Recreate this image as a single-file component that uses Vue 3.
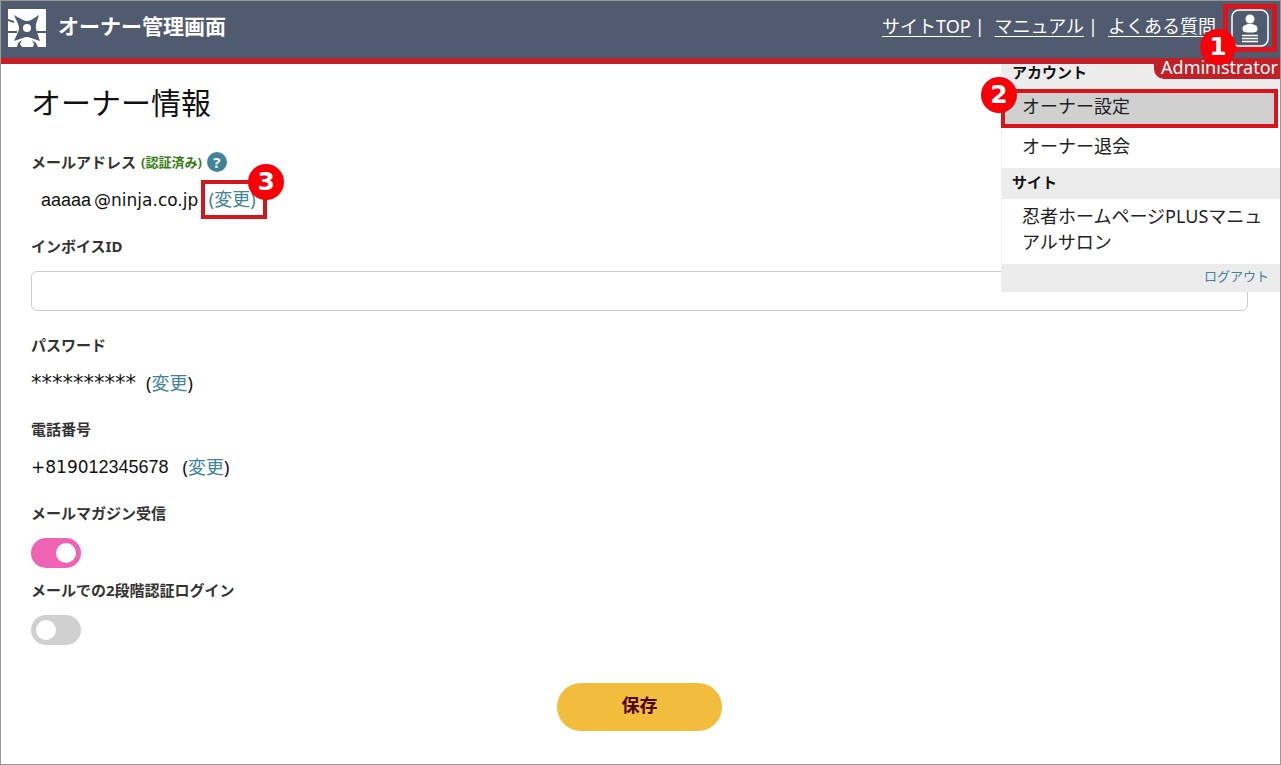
<script setup>
import { ref } from 'vue'

const invoiceId = ref('')
const magazine = ref(true)
const twoStep = ref(false)
</script>

<template>
  <div class="page">
    <header class="header">
      <div class="brand">
        <svg class="logo" viewBox="0 0 38 38" aria-hidden="true">
          <rect width="38" height="38" fill="#fff" />
          <path d="M0 10l6 2v2l-6-2zM0 22h9v2H0zM29 22h9v2h-9z" fill="#515b70" />
          <path d="M9 38l1-4 4-3-2 4 2 3zM30 38l-2-4-4-3 2 4-1 3z" fill="#515b70" />
          <path d="M6 6l9 5q4 2 8 0l8-5-3 9q-1 4 1 8l3 9-9-3q-4-2-8 0l-9 3 4-9q2-4 0-8z" fill="#515b70" />
          <circle cx="19" cy="19" r="4" fill="#fff" />
        </svg>
        <span class="brand-name">オーナー管理画面</span>
      </div>
      <nav class="nav">
        <a href="#">サイトTOP</a><span class="bar">|</span>
        <a href="#">マニュアル</a><span class="bar">|</span>
        <a href="#">よくある質問</a>
        <button class="account" type="button" aria-label="アカウント">
          <svg viewBox="0 0 38 38" aria-hidden="true">
            <rect x="1" y="1" width="36" height="36" rx="7" fill="none" stroke="#fff" stroke-width="1.5" />
            <circle cx="19" cy="10" r="4.5" fill="#fff" />
            <path d="M12 22c-2-5 2-7 7-7s9 2 7 7c-1 2-13 2-14 0z" fill="#fff" />
            <path d="M11 26.500h16M11 29.500h16M11 32.500h16" stroke="#fff" stroke-width="1.5" />
          </svg>
          <span class="mark">1</span>
        </button>
      </nav>

      <aside class="menu">
        <span class="role">Administrator</span>
        <h2 class="menu-title first">アカウント</h2>
        <a class="menu-item current" href="#">オーナー設定<span class="mark">2</span></a>
        <a class="menu-item" href="#">オーナー退会</a>
        <h2 class="menu-title">サイト</h2>
        <a class="menu-item site" href="#">忍者ホームページPLUSマニュアルサロン</a>
        <div class="menu-foot"><a href="#">ログアウト</a></div>
      </aside>
    </header>

    <main class="main">
      <h1>オーナー情報</h1>
      <section class="field">
        <h3 class="label">メールアドレス <small>(認証済み)</small>
          <button class="help" type="button" aria-label="ヘルプ">?</button>
        </h3>
        <div class="value mail">
          <span class="mail-user">aaaaa</span><span class="wide">@ninja.co.jp</span>
          <a class="boxed" href="#">(変更)<span class="mark">3</span></a>
        </div>
      </section>
      <section class="field">
        <label class="label" for="invoice">インボイスID</label>
        <input id="invoice" v-model="invoiceId" class="text" type="text">
      </section>
      <section class="field">
        <h3 class="label">パスワード</h3>
        <div class="value password"><span class="stars">**********</span><span>(<a href="#">変更</a>)</span></div>
      </section>
      <section class="field">
        <h3 class="label">電話番号</h3>
        <div class="value phone"><span><span class="wide">+8190</span><span class="digits">12345678</span></span><span>(<a href="#">変更</a>)</span></div>
      </section>
      <section class="field switch">
        <label class="label" for="magazine">メールマガジン受信</label>
        <input id="magazine" v-model="magazine" class="toggle" type="checkbox">
      </section>
      <section class="field switch">
        <label class="label" for="twostep">メールでの2段階認証ログイン</label>
        <input id="twostep" v-model="twoStep" class="toggle" type="checkbox">
      </section>
      <button class="save" type="button">保存</button>
    </main>
  </div>
</template>

<style>
body {
  margin: 0;
  background: #fff;
}
</style>

<style scoped>
.page {
  box-sizing: border-box;
  min-height: 100vh;
  border: 1px solid #999;
  color: #111;
  background: #fff;
  font: 18px/24px "Noto Sans", "Noto Sans CJK JP", sans-serif;
}
.page * {
  box-sizing: border-box;
}
h1, h2, h3 {
  margin: 0;
}
button, input {
  margin: 0;
  padding: 0;
  font: inherit;
}
a {
  color: #42839b;
  text-decoration: none;
}
.header {
  position: relative;
  display: flex;
  justify-content: space-between;
  height: 63px;
  border-bottom: 6px solid #c22026;
  background: #515b70;
}
.brand {
  display: flex;
  align-items: center;
  gap: 12px;
  padding: 0 0 4px 7px;
  color: #fff;
}
.logo {
  width: 38px;
  height: 38px;
}
.brand-name {
  padding-bottom: 4px;
  font-size: 21px;
  font-weight: 700;
}
.nav {
  display: flex;
  align-items: center;
  padding: 0 3px 4px 0;
  color: #fff;
}
.nav > a,
.bar {
  padding-bottom: 4px;
}
.nav > a {
  color: #fff;
  text-decoration: underline;
  text-underline-offset: 3px;
}
.bar {
  margin: 0 10px 0 4px;
}
.account {
  position: relative;
  display: flex;
  align-items: center;
  justify-content: center;
  width: 54px;
  height: 48px;
  margin-left: 7px;
  border: 5px solid #d9141a;
  background: none;
}
.account svg {
  flex: none;
  width: 38px;
  height: 38px;
}
.mark {
  position: absolute;
  z-index: 3;
  display: grid;
  place-items: center;
  width: 36px;
  height: 36px;
  border-radius: 50%;
  background: #f80008;
  color: #fff;
  font: 700 25px/36px "DejaVu Sans", Verdana, sans-serif;
}
.account .mark {
  z-index: 4;
  left: -28px;
  top: 20px;
}
.menu {
  position: absolute;
  z-index: 2;
  top: 63px;
  right: 0;
  width: 279px;
  border-left: 1px solid #eee;
  background: #fff;
}
.role {
  position: absolute;
  right: 0;
  top: -6px;
  height: 21px;
  padding: 0 2px 0 7px;
  border-bottom-left-radius: 10px;
  background: #c22026;
  color: #fff;
  line-height: 18px;
}
.menu-title {
  padding: 2px 10px 5px;
  background: #ececec;
  font-size: 15px;
  line-height: 24px;
}
.menu-title.first {
  padding: 0 10px 8px;
  line-height: 17px;
}
.menu-item {
  position: relative;
  display: block;
  padding: 6px 20px 10px;
  color: #222;
}
.menu-item.current {
  margin: 0 2px 0 -1px;
  padding: 3px 17px 8px;
  border: 4px solid #d9141a;
  line-height: 20px;
  background: #d0d0d0;
}
.current .mark {
  left: -24px;
  top: -16px;
}
.menu-item.site {
  padding: 4px 16px 9px 20px;
  line-height: 26px;
}
.menu-foot {
  padding: 0 11px 4px;
  background: #ececec;
  font-size: 13px;
  text-align: right;
}
.main {
  display: flex;
  flex-direction: column;
  gap: 22px;
  padding: 19px 32px 32px 30px;
}
h1 {
  margin-bottom: 5px;
  font-size: 30px;
  font-weight: 400;
  line-height: 40px;
}
.field {
  display: flex;
  flex-direction: column;
  align-items: flex-start;
  gap: 13px;
}
.label {
  display: flex;
  align-items: center;
  gap: 5px;
  color: #333;
  font-size: 15px;
  font-weight: 700;
  line-height: 24px;
}
.label small {
  color: #357c14;
  font-size: 13px;
}
.help {
  width: 20px;
  height: 20px;
  border: 0;
  border-radius: 50%;
  background: #42839b;
  color: #fff;
  font-size: 15px;
  line-height: 20px;
}
.value {
  display: flex;
  align-items: center;
  height: 25px;
}
.wide {
  font-family: "DejaVu Sans", Verdana, sans-serif;
  font-size: 17px;
}
.mail {
  padding-left: 10px;
}
.mail-user {
  margin-right: 3px;
  font-family: "Liberation Sans", Arial, sans-serif;
}
.boxed {
  position: relative;
  width: 66px;
  height: 39px;
  margin-left: 3px;
  padding-right: 4px;
  border: 4px solid #cf171d;
  line-height: 31px;
  text-align: center;
  white-space: nowrap;
}
.boxed .mark {
  left: 43px;
  top: -20px;
}
.text {
  width: 100%;
  height: 40px;
  padding: 0 12px;
  border: 1px solid #ccc;
  border-radius: 6px;
  background: #fff;
}
.password {
  gap: 10px;
}
.stars {
  font-family: "DejaVu Sans", Verdana, sans-serif;
  font-size: 21px;
}
.phone {
  gap: 14px;
}
.digits {
  font-family: "Liberation Sans", Arial, sans-serif;
}
.switch + .switch {
  margin-top: -12px;
}
.toggle {
  appearance: none;
  display: flex;
  width: 50px;
  height: 30px;
  padding: 5px;
  border-radius: 15px;
  background: #d0d0d0;
}
.toggle::before {
  content: "";
  width: 20px;
  height: 20px;
  border-radius: 50%;
  background: #fff;
}
.toggle:checked {
  justify-content: flex-end;
  background: #ee63b4;
}
.save {
  align-self: center;
  width: 165px;
  height: 48px;
  margin-top: 16px;
  padding-bottom: 4px;
  border: 0;
  border-radius: 24px;
  background: #f2bc3d;
  color: #4c0505;
  font-weight: 700;
}
</style>
